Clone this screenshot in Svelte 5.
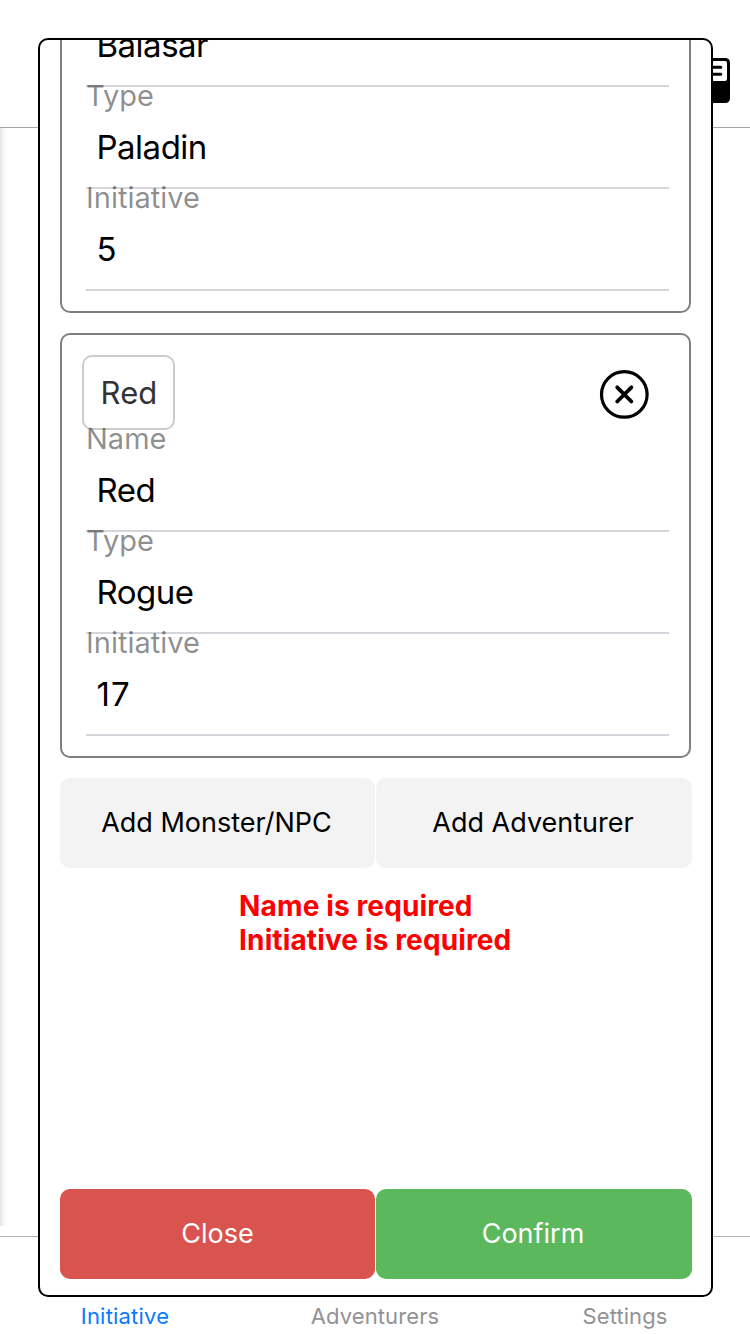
<script>
  const combatants = [
    { chip: '', fields: [['', 'Balasar'], ['Type', 'Paladin'], ['Initiative', '5']] },
    { chip: 'Red', fields: [['Name', 'Red'], ['Type', 'Rogue'], ['Initiative', '17']] }
  ];
  const errors = ['Name is required', 'Initiative is required'];
</script>

<div class="screen">
  <header>
    <svg width="40" height="46" viewBox="0 0 40 46">
      <rect x="0" y="1" width="40" height="45" rx="4.5" />
      <rect class="paper" x="3" y="4" width="34" height="20" rx="2" />
      <path class="rule" d="M8 10.3H30.8M8 17.3H30.8" />
    </svg>
  </header>
  <main></main>
  <nav>
    <span class="tab active">Initiative</span>
    <span class="tab">Adventurers</span>
    <span class="tab">Settings</span>
  </nav>

  <div class="modal">
    <div class="scroll">
      <div class="list">
        {#each combatants as c}
          <section class="card">
            <div class="head">
              {#if c.chip}
                <button class="pick">{c.chip}</button>
                <svg class="remove" width="50" height="50" viewBox="0 0 50 50">
                  <circle cx="25.3" cy="25.4" r="22.8" />
                  <path d="M18.2 18.3L32.4 32.5M32.4 18.3L18.2 32.5" />
                </svg>
              {/if}
            </div>
            {#each c.fields as [label, value]}
              <div class="field">
                <span class="label">{label}</span>
                <span class="value" class:number={label === 'Initiative'}>{value}</span>
              </div>
            {/each}
          </section>
        {/each}
      </div>
      <div class="actions">
        <button class="light">Add Monster/NPC</button>
        <button class="light">Add Adventurer</button>
      </div>
      <div class="errors">
        {#each errors as e}<div>{e}</div>{/each}
      </div>
    </div>
    <div class="actions">
      <button class="danger">Close</button>
      <button class="success">Confirm</button>
    </div>
  </div>
</div>

<style>
  :global(body) { margin: 0; background: #fff; }
  .screen {
    position: relative; width: 750px; height: 1334px; overflow: hidden;
    display: flex; flex-direction: column; background: #fff;
    font-family: Inter, "Liberation Sans", sans-serif; color: #000;
  }
  .screen * { box-sizing: border-box; }
  header {
    height: 128px; flex: none; padding: 57px 20px 0 0; display: flex;
    justify-content: flex-end; align-items: flex-start; border-bottom: 1px solid #a7a7aa;
  }
  .paper { fill: #fff; }
  .rule { stroke: #000; stroke-width: 3; stroke-linecap: round; }
  main { flex: 1; background: linear-gradient(to right, #e2e2e2, #f5f5f5 3px, #fff 8px) no-repeat 0 0 / 8px 1098px; }
  nav { height: 98px; flex: none; display: flex; align-items: flex-end; border-top: 1px solid #b2b2b2; }
  .tab {
    flex: 1; text-align: center; font-size: 22px; line-height: 28px; padding-bottom: 4px;
    letter-spacing: 0.1px; color: #929296;
  }
  .active { color: #0a7aff; letter-spacing: 0.2px; }
  .modal {
    position: absolute; left: 38px; top: 38px; width: 675px; height: 1259px;
    border: 2px solid #000; border-radius: 10px; background: #fff; overflow: hidden;
    padding: 0 19px 16px 20px; display: flex; flex-direction: column;
  }
  .scroll { flex: 1; min-height: 0; }
  .list { margin: -152px 1px 20px 0; display: flex; flex-direction: column; gap: 20px; }
  .card { border: 2px solid #808080; border-radius: 10px; padding: 20px; }
  .head { height: 75px; display: flex; justify-content: space-between; padding-right: 20px; }
  .pick {
    width: 93px; height: 75px; border: 2px solid #ccc; border-radius: 10px; background: #fff;
    color: #333; font: 400 31px/71px Inter, sans-serif; padding: 0 0 0 1px; letter-spacing: 0.1px;
  }
  .remove { margin-top: 14px; fill: none; stroke: #000; stroke-width: 3.2; stroke-linecap: round; }
  .remove path { stroke-width: 3.8; }
  .field {
    height: 102px; margin-left: 4px; border-bottom: 2px solid #d6d5db;
    display: flex; flex-direction: column;
  }
  .label { height: 36px; font-size: 29px; line-height: 36px; margin-top: -9px; color: rgba(0, 0, 0, 0.46); position: relative; }
  .value { font-size: 33px; line-height: 40px; margin: 13px 0 0 10.5px; letter-spacing: -0.5px; }
  .value.number { letter-spacing: 1.2px; }
  .actions { display: grid; grid-template-columns: 315px 316px; gap: 1px; }
  .actions button {
    height: 90px; border: 0; border-radius: 10px; padding: 0 2px 0 0;
    font: 400 27px/90px Inter, sans-serif; color: #fff;
  }
  .actions .light { background: #f3f3f3; color: #000; }
  .actions .danger { background: #d9534f; padding: 0; }
  .success { background: #5cb85c; }
  .errors {
    width: fit-content; margin: 20.5px auto 0; color: #f00; font-weight: 700;
    font-size: 28px; line-height: 34px; letter-spacing: 0.13px; padding-right: 1.5px;
  }
</style>
